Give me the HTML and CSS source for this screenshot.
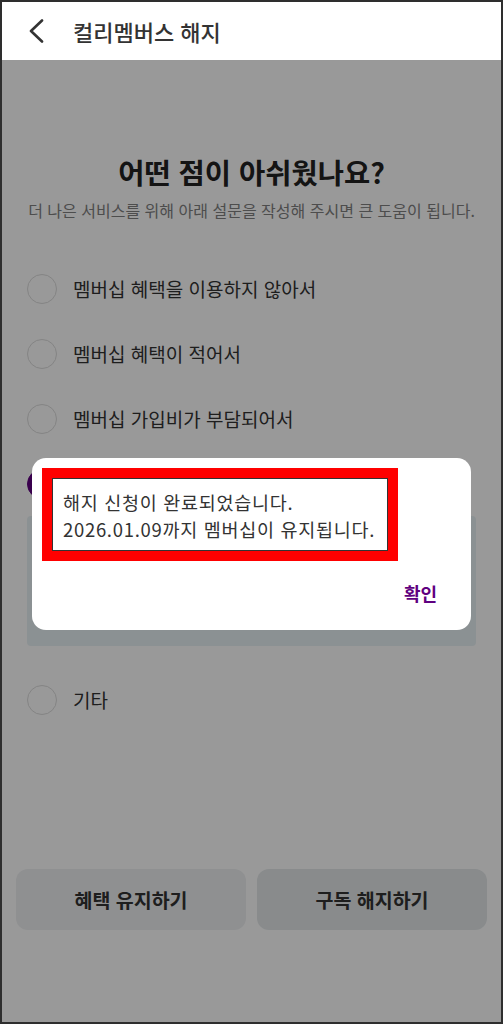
FILE: index.html
```html
<!DOCTYPE html>
<html lang="ko">
<head>
    <meta charset="UTF-8">
    <meta name="viewport" content="width=device-width, initial-scale=1.0">
    <title>컬리멤버스 해지</title>
    <link rel="stylesheet" href="styles.css">
</head>
<body>
    <div class="screen">
        <header class="top-bar">
            <button class="back-button" aria-label="뒤로">
                <svg width="24" height="24" viewBox="0 0 24 24">
                    <path d="M17 1.5 L6 12 L17 22.5" fill="none" stroke="#333" stroke-width="2.6" stroke-linecap="round" stroke-linejoin="round"/>
                </svg>
            </button>
            <h1 class="top-title">컬리멤버스 해지</h1>
        </header>

        <main class="survey">
            <h2 class="survey-title">어떤 점이 아쉬웠나요?</h2>
            <p class="survey-desc">더 나은 서비스를 위해 아래 설문을 작성해 주시면 큰 도움이 됩니다.</p>

            <ul class="option-list">
                <li class="option"><span class="radio"></span>멤버십 혜택을 이용하지 않아서</li>
                <li class="option"><span class="radio"></span>멤버십 혜택이 적어서</li>
                <li class="option"><span class="radio"></span>멤버십 가입비가 부담되어서</li>
                <li class="option selected"><span class="radio"></span></li>
                <li class="option-note"></li>
                <li class="option"><span class="radio"></span>기타</li>
            </ul>

            <div class="bottom-actions">
                <button class="action-button keep">혜택 유지하기</button>
                <button class="action-button cancel">구독 해지하기</button>
            </div>
        </main>

        <!-- 해지 완료 알림 -->
        <div class="dim">
            <div class="dialog">
                <div class="dialog-message">
                    <p>해지 신청이 완료되었습니다.</p>
                    <p>2026.01.09까지 멤버십이 유지됩니다.</p>
                </div>
                <div class="dialog-footer">
                    <button class="dialog-ok">확인</button>
                </div>
            </div>
        </div>
    </div>
</body>
</html>
```

FILE: styles.css
```css
* {
    box-sizing: border-box;
}
body {
    margin: 0;
    font-family: "Noto Sans CJK KR", "Noto Sans", sans-serif;
    color: #333;
}
button {
    font-family: inherit;
    border: none;
    background: none;
    padding: 0;
    cursor: pointer;
}
.screen {
    position: relative;
    width: 503px;
    height: 1024px;
    border: 2px solid #2e2e2e;
    background: white;
    overflow: hidden;
    display: flex;
    flex-direction: column;
}
.top-bar {
    height: 58px;
    display: flex;
    align-items: center;
    padding-left: 23px;
    gap: 24px;
    background: white;
}
.back-button {
    width: 24px;
    height: 24px;
    display: flex;
}
.top-title {
    margin: 0;
    font-size: 22px;
    font-weight: 500;
    color: #333;
}
.survey {
    flex: 1;
    display: flex;
    flex-direction: column;
    padding: 94px 14px 0 14px;
}
.survey-title {
    margin: 0;
    text-align: center;
    font-size: 28.5px;
    line-height: 36px;
    font-weight: 700;
    color: #222;
}
.survey-desc {
    margin: 9px 0 0;
    text-align: center;
    font-size: 16px;
    line-height: 22px;
    color: #808080;
}
.option-list {
    list-style: none;
    margin: 35px 0 0;
    padding: 0 11px;
}
.option {
    height: 65px;
    display: flex;
    align-items: center;
    gap: 16px;
    font-size: 19px;
    color: #333;
}
.radio {
    width: 30px;
    height: 30px;
    border-radius: 50%;
    border: 1.5px solid #dcdcdc;
    flex-shrink: 0;
}
.selected .radio {
    background: #5f0080;
    border-color: #5f0080;
}
.option-note {
    height: 130px;
    margin: 0 0 21px;
    background: #e8f2f5;
    border-radius: 4px;
}
.bottom-actions {
    display: flex;
    gap: 11px;
    margin-top: 137px;
}
.action-button {
    flex: 1;
    height: 61px;
    border-radius: 12px;
    font-size: 19.5px;
    font-weight: 700;
    color: #333;
}
.keep {
    background: #eef0f2;
}
.cancel {
    background: #e4e8ea;
}
.dim {
    position: absolute;
    top: 58px;
    left: 0;
    right: 0;
    bottom: 0;
    background: rgba(0, 0, 0, 0.4);
}
.dialog {
    position: absolute;
    top: 398px;
    left: 30px;
    width: 439px;
    height: 172px;
    padding: 10px;
    background: white;
    border-radius: 14px;
    display: flex;
    flex-direction: column;
}
.dialog-message {
    width: 356px;
    padding: 11px 10px 8px;
    border: 10px solid #ff0000;
    box-shadow: inset 0 0 0 1px #333;
}
.dialog-message p {
    margin: 0;
    padding-left: 1px;
    font-size: 18.5px;
    line-height: 27px;
    letter-spacing: 0.7px;
    color: #333;
    white-space: nowrap;
}
.dialog-footer {
    flex: 1;
    display: flex;
    justify-content: flex-end;
    align-items: center;
    padding-right: 24px;
    padding-top: 4px;
}
.dialog-ok {
    font-size: 18px;
    font-weight: 700;
    color: #5f0080;
}
```
